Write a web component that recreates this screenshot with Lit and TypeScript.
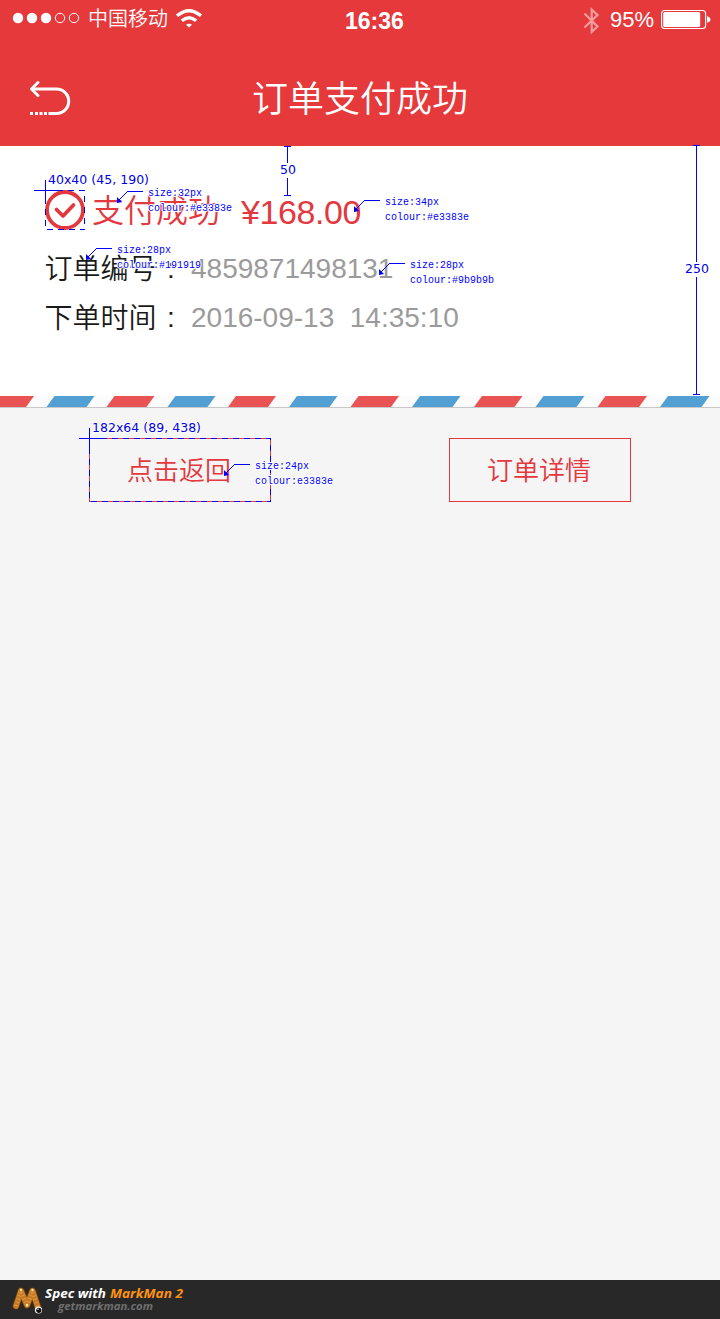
import { LitElement, html, svg, css } from "lit";
import { customElement } from "lit/decorators.js";

const stripes = [
  [-8, 34, 0], [54.5, 94.5, 1], [114.5, 154.5, 0], [175.5, 215.5, 1],
  [236, 276, 0], [297, 337.5, 1], [358.5, 399, 0], [420, 460.5, 1],
  [482, 522.5, 0], [543.5, 584.5, 1], [605.5, 647, 0], [668, 709.5, 1],
];

// anchor x, anchor y (corner of the arrow), size label, colour label
const notes: [number, number, string, string][] = [
  [117, 202, "size:32px", "colour:#e3383e"],
  [354, 211, "size:34px", "colour:#e3383e"],
  [86, 259, "size:28px", "colour:#191919"],
  [379, 274, "size:28px", "colour:#9b9b9b"],
  [224, 475, "size:24px", "colour:e3383e"],
];

@customElement("status-bar")
class StatusBar extends LitElement {
  static styles = css`
    :host { display: flex; height: 40px; color: #fff; align-items: flex-start; }
    .left { display: flex; width: 345px; padding: 6px 0 0 12px; box-sizing: border-box; }
    .dots { width: 68px; height: 24px; margin-right: 8px; }
    .carrier { font: 350 20px/24px "Noto Sans CJK SC", sans-serif; width: 80px; white-space: nowrap; }
    .wifi { width: 28px; height: 24px; margin-left: 7px; }
    .time { font: bold 23px/26px "Liberation Sans", sans-serif; padding-top: 8px; width: 238px; }
    .bt { width: 18px; height: 30px; margin-top: 6px; opacity: .5; }
    .pct { font: 22px/26px "Liberation Sans", sans-serif; padding-top: 7px; margin-left: 9px; width: 51px; }
    .bat { width: 51px; height: 22px; margin-top: 9px; }
  `;
  render() {
    return html`
      <div class="left">
        <svg class="dots" viewBox="0 0 68 24" fill="#fff">
          <circle cx="6" cy="12" r="5.2"/><circle cx="20" cy="12" r="5.2"/><circle cx="34" cy="12" r="5.2"/>
          <g fill="none" stroke="#fff"><circle cx="48" cy="12" r="4.7"/><circle cx="62" cy="12" r="4.7"/></g>
        </svg>
        <span class="carrier">中国移动</span>
        <svg class="wifi" viewBox="0 0 28 24" fill="none" stroke="#fff" stroke-width="3.4">
          <path d="M2 9.8Q14 -.5 26 9.8M6.8 14.8Q14 8.5 21.2 14.8"/>
          <path d="M11 18.8Q14 16.8 17 18.8L14 21.6Z" fill="#fff" stroke="none"/>
        </svg>
      </div>
      <div class="time">16:36</div>
      <svg class="bt" viewBox="0 0 18 30" fill="none" stroke="#fff" stroke-width="2.2">
        <path d="M1.5 7.5L14.5 20.5L8.7 26V3.5L14.5 9L1.5 21.5"/>
      </svg>
      <div class="pct">95%</div>
      <svg class="bat" viewBox="0 0 51 22">
        <rect x=".6" y="1.5" width="44" height="18" rx="3" fill="none" stroke="#fff" stroke-width="1.1"/>
        <rect x="2.2" y="3" width="37" height="15" rx="1.5" fill="#fff"/>
        <path d="M46 7.2Q49.4 8 49.4 10.5T46 13.8Z" fill="#fff"/>
      </svg>`;
  }
}

@customElement("spec-overlay")
class SpecOverlay extends LitElement {
  static styles = css`
    :host { position: absolute; inset: 0; pointer-events: none; }
    svg { display: block; width: 720px; height: 1319px; }
    .line { fill: none; stroke: #00f; stroke-width: 1; shape-rendering: crispEdges; }
    .diag { fill: none; stroke: #00f; stroke-width: 1; }
    .tip { fill: #00f; }
    .mono { font: 10px "Liberation Mono", monospace; fill: #00f; }
    .dim { font: 12.5px "DejaVu Sans", sans-serif; }
    text { fill: #0000e6; stroke: #fff; stroke-width: 2px; paint-order: stroke; stroke-linejoin: round; white-space: pre; }
    .dash { stroke-dasharray: 6 5; }
  `;
  render() {
    return html`<svg viewBox="0 0 720 1319">
      <path class="line" d="M284 146.5H291M287.5 146V163M287.5 178V195M284 195.5H291"/>
      <path class="line" d="M693 145.5H700M696.5 145V262M696.5 277V394M693 394.5H700"/>
      <path class="line" d="M34 190.5H57M45.5 180V204"/>
      <path class="line dash" d="M45.5 190.5H84.5V229.5H45.5Z"/>
      <path class="line" d="M79 438.5H104M89.5 428V453"/>
      <path class="line dash" d="M89.5 438.5H270.5V501.5H89.5Z"/>
      ${notes.map(([x, y, a, b]) => svg`
        <path class="line" d="M${x + 10} ${y - 10.5}H${x + 26}"/>
        <path class="diag" d="M${x + 2} ${y - 2}L${x + 10.5} ${y - 10.5}"/>
        <path class="tip" d="M${x} ${y + 1}V${y - 5}L${x + 5} ${y}Z"/>
        <text class="mono" x=${x + 31} y=${y - 6} textLength="54">${a}</text>
        <text class="mono" x=${x + 31} y=${y + 9} textLength=${b.length * 6}>${b}</text>`)}
      <text class="dim" x="280" y="174" textLength="16">50</text>
      <text class="dim" x="685" y="273" textLength="24">250</text>
      <text class="dim" x="48" y="184" textLength="101">40x40 (45, 190)</text>
      <text class="dim" x="92" y="432" textLength="109">182x64 (89, 438)</text>
    </svg>`;
  }
}

@customElement("app-root")
class AppRoot extends LitElement {
  static styles = css`
    :host { display: flex; flex-direction: column; position: relative; width: 720px; height: 1319px; overflow: hidden; background: #f5f5f5; font-family: "Liberation Sans", "Noto Sans CJK TC", sans-serif; font-weight: 350; }
    header { height: 146px; background: #e5393c; color: #fff; }
    .nav { display: grid; grid-template-columns: 100px 520px 100px; align-items: center; height: 106px; }
    .back { width: 42px; height: 36px; margin: 10px 0 0 29px; }
    h1 { margin: 5px 0 0; text-align: center; font: 350 36px/50px "Noto Sans CJK SC", sans-serif; }
    .summary { height: 250px; box-sizing: border-box; padding: 44px 45px 0 44px; background: #fff; }
    .paid { display: flex; align-items: center; height: 40px; color: #e3383e; }
    .check { width: 40px; height: 40px; margin-left: 1px; }
    .state { font: 350 32px/40px "Noto Sans CJK SC", sans-serif; margin: -4px 0 0 7px; width: 149px; }
    .price { font-size: 34px; line-height: 40px; padding-top: 3px; letter-spacing: -.4px; }
    .row { display: flex; height: 49px; line-height: 49px; font-size: 28px; color: #9b9b9b; white-space: pre; }
    .row.first { margin-top: 13px; }
    .label { width: 146.5px; padding-left: .5px; color: #191919; font-family: "Noto Sans CJK SC", sans-serif; }
    .value { padding-top: 1px; }
    .colon { font-family: "Liberation Sans", sans-serif; margin-left: 10.5px; vertical-align: 1px; line-height: 1; }
    .stripe { display: block; width: 720px; height: 12px; flex: none; }
    .actions { display: flex; justify-content: space-between; padding: 30px 89px 0; flex: 1; }
    .btn { all: unset; box-sizing: border-box; width: 182px; height: 64px; padding: 0 2px 3px 0; border: 1px solid #e3383e; color: #e3383e; text-align: center; font: 350 26px/59px "Noto Sans CJK SC", sans-serif; }
    footer { display: flex; height: 39px; background: #282828; font: italic bold 13px/14px "Open Sans", sans-serif; color: #fff; }
    .logo { width: 34px; height: 34px; margin: 3px 0 0 10px; }
    .words { padding-top: 2px; }
    .words svg { display: block; width: 146px; height: 36px; }
  `;
  render() {
    return html`
      <header>
        <status-bar></status-bar>
        <div class="nav">
          <svg class="back" viewBox="0 0 42 36" fill="none" stroke="#fff" stroke-width="3">
            <path d="M9 2.5L2.5 9L9 15.5" stroke-linecap="round" stroke-linejoin="round"/>
            <path d="M3 9H27.5A12.1 12.1 0 0 1 27.5 33.5H20"/>
            <path d="M1 33.5H4M6 33.5H9M10.5 33.5H13.5M15 33.5H18M19.5 33.5H22"/>
          </svg>
          <h1>订单支付成功</h1>
        </div>
      </header>
      <section class="summary">
        <div class="paid">
          <svg class="check" viewBox="0 0 40 40" fill="none" stroke="#e3383e" stroke-width="3.8">
            <circle cx="20" cy="20" r="18"/>
            <path d="M11.5 19.5L18 26L28.5 15" stroke-linecap="round" stroke-linejoin="round"/>
          </svg>
          <span class="state">支付成功</span><span class="price">¥168.00</span>
        </div>
        <div class="row first"><span class="label">订单编号<span class="colon">:</span></span><span class="value">4859871498131</span></div>
        <div class="row"><span class="label">下单时间<span class="colon">:</span></span><span class="value">2016-09-13  14:35:10</span></div>
      </section>
      <svg class="stripe" viewBox="0 0 720 12">
        <rect width="720" height="12" fill="#fafbfa"/>
        ${stripes.map(([a, b, c]) => svg`<path d="M${a} 0H${b}L${b - 8} 11H${a - 8}Z" fill=${c ? "#519fd3" : "#ea5353"}/>`)}
        <rect y="11" width="720" height="1" fill="#c8c8c8"/>
      </svg>
      <div class="actions"><button class="btn">点击返回</button><button class="btn">订单详情</button></div>
      <footer>
        <svg class="logo" viewBox="0 0 34 34" fill="none" stroke-linecap="round" stroke-linejoin="round">
          <path d="M6 23L11 8L17 22L22.5 8L28.5 26" stroke="#6d3b0c" stroke-width="7"/>
          <path d="M6 23L11 8L17 22L22.5 8L28.5 26" stroke="#c47a24" stroke-width="5.6"/>
          <path d="M6 23L11 8L17 22L22.5 8L28.5 26" stroke="#dc9540" stroke-width="4.4" stroke-dasharray="1 2.4" stroke-linecap="butt"/>
          <circle cx="11" cy="7" r="1.2" fill="#ffe6a8"/><circle cx="22.5" cy="7" r="1.2" fill="#ffe6a8"/><circle cx="17" cy="22" r="1.2" fill="#ffe6a8"/>
          <circle cx="28.5" cy="27" r="3.6" fill="#fff"/><circle cx="28.8" cy="27.3" r="2.6" fill="#111"/><circle cx="28" cy="26.3" r=".7" fill="#fff"/>
        </svg>
        <div class="words"><svg viewBox="0 0 146 36">
          <text x="1" y="16" textLength="61" lengthAdjust="spacingAndGlyphs" fill="#fff">Spec with</text>
          <text x="66" y="16" textLength="73" lengthAdjust="spacingAndGlyphs" fill="#ff9210">MarkMan 2</text>
          <text x="14" y="28" textLength="95" lengthAdjust="spacingAndGlyphs" font-size="11" fill="#6f6f6f">getmarkman.com</text>
        </svg></div>
      </footer>
      <spec-overlay></spec-overlay>`;
  }
}
